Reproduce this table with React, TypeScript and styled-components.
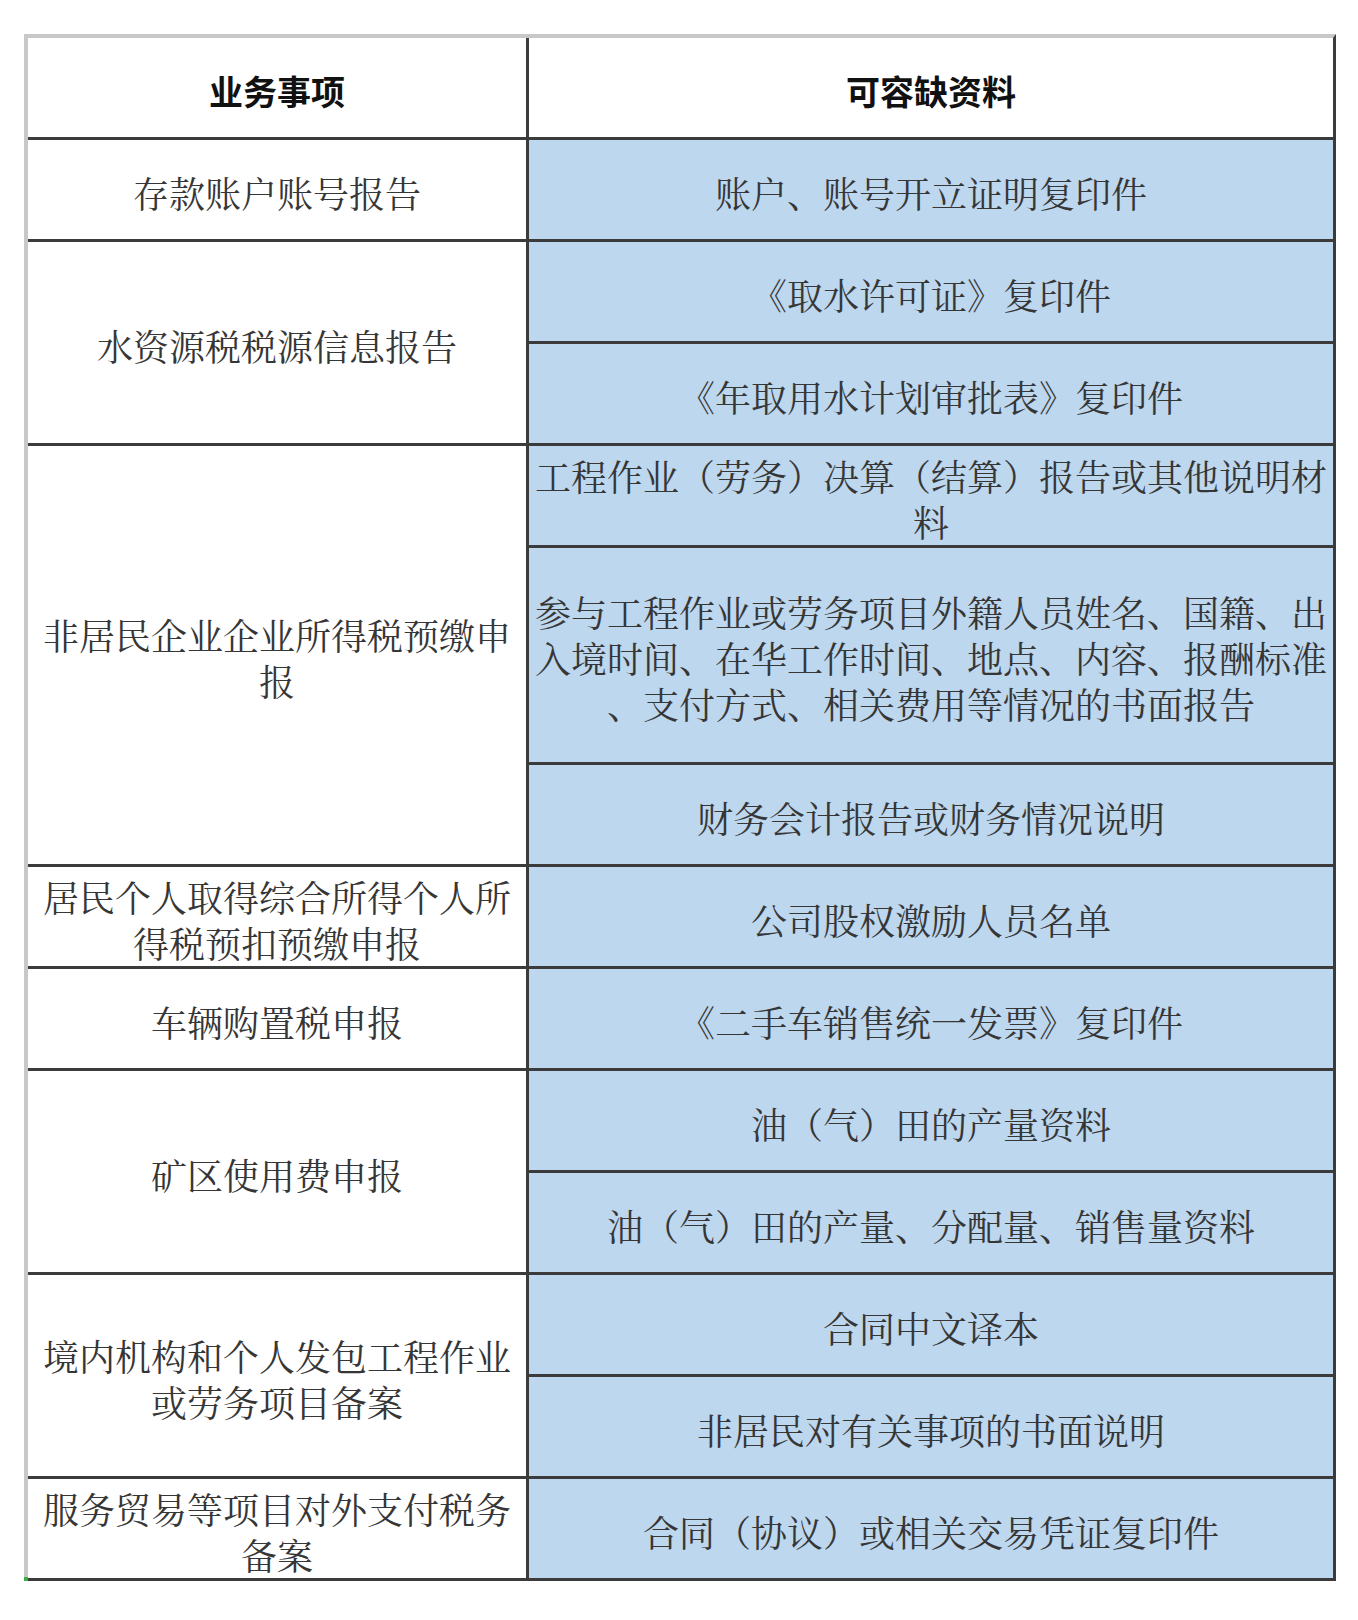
import styled, { createGlobalStyle } from 'styled-components';

type Group = { item: string; materials: { text: string; tall?: boolean }[] };

const groups: Group[] = [
    { item: '存款账户账号报告', materials: [{ text: '账户、账号开立证明复印件' }] },
    {
        item: '水资源税税源信息报告',
        materials: [{ text: '《取水许可证》复印件' }, { text: '《年取用水计划审批表》复印件' }],
    },
    {
        item: '非居民企业企业所得税预缴申报',
        materials: [
            { text: '工程作业（劳务）决算（结算）报告或其他说明材料' },
            {
                text: '参与工程作业或劳务项目外籍人员姓名、国籍、出入境时间、在华工作时间、地点、内容、报酬标准、支付方式、相关费用等情况的书面报告',
                tall: true,
            },
            { text: '财务会计报告或财务情况说明' },
        ],
    },
    { item: '居民个人取得综合所得个人所得税预扣预缴申报', materials: [{ text: '公司股权激励人员名单' }] },
    { item: '车辆购置税申报', materials: [{ text: '《二手车销售统一发票》复印件' }] },
    {
        item: '矿区使用费申报',
        materials: [{ text: '油（气）田的产量资料' }, { text: '油（气）田的产量、分配量、销售量资料' }],
    },
    {
        item: '境内机构和个人发包工程作业或劳务项目备案',
        materials: [{ text: '合同中文译本' }, { text: '非居民对有关事项的书面说明' }],
    },
    { item: '服务贸易等项目对外支付税务备案', materials: [{ text: '合同（协议）或相关交易凭证复印件' }] },
];

const App = () => {
    return (
        <>
            <GlobalStyle />
            <Page>
                <Table>
                    <HeadCell>业务事项</HeadCell>
                    <HeadCell>可容缺资料</HeadCell>
                    {groups.map((g) => (
                        <Group key={g.item} g={g} />
                    ))}
                </Table>
            </Page>
        </>
    );
};

const Group = ({ g }: { g: Group }) => (
    <>
        <ItemCell $span={g.materials.length}>{g.item}</ItemCell>
        {g.materials.map((m) => (
            <MaterialCell key={m.text}>{m.text}</MaterialCell>
        ))}
    </>
);

export default App;

const LINE = '#3b3b3b';

const GlobalStyle = createGlobalStyle`
    body {
        margin: 0;
        background: #ffffff;
    }
`;

const Page = styled.div`
    padding: 34px 0 0 24px;
`;

const Table = styled.div`
    position: relative;
    display: grid;
    width: 1312px;
    box-sizing: border-box;
    grid-template-columns: 498px 804px;
    grid-template-rows: repeat(5, 99px) 214px repeat(8, 99px);
    gap: 3px;
    background: ${LINE};
    border-top: 4px solid #c8c8c8;
    border-left: 4px solid #c8c8c8;
    border-right: 3px solid ${LINE};
    border-bottom: 3px solid ${LINE};

    &::after {
        content: '';
        position: absolute;
        left: -4px;
        bottom: -3px;
        width: 4px;
        height: 4px;
        background: #3fae49;
    }
`;

const Cell = styled.div`
    display: flex;
    align-items: center;
    justify-content: center;
    box-sizing: border-box;
    padding: 6px 8px 0;
    text-align: center;
    font-family: 'Noto Serif CJK SC', 'Noto Sans CJK SC', serif;
    font-size: 36px;
    line-height: 46px;
    color: #363636;
    line-break: anywhere;
    background: #ffffff;
`;

const HeadCell = styled(Cell)`
    font-family: 'Noto Sans CJK SC', sans-serif;
    font-size: 34px;
    font-weight: 700;
    color: #111111;
`;

const ItemCell = styled(Cell)<{ $span: number }>`
    grid-column: 1;
    grid-row: span ${(p) => p.$span};
`;

const MaterialCell = styled(Cell)`
    grid-column: 2;
    padding: 6px 4px 0;
    background: #bdd7ee;
`;
